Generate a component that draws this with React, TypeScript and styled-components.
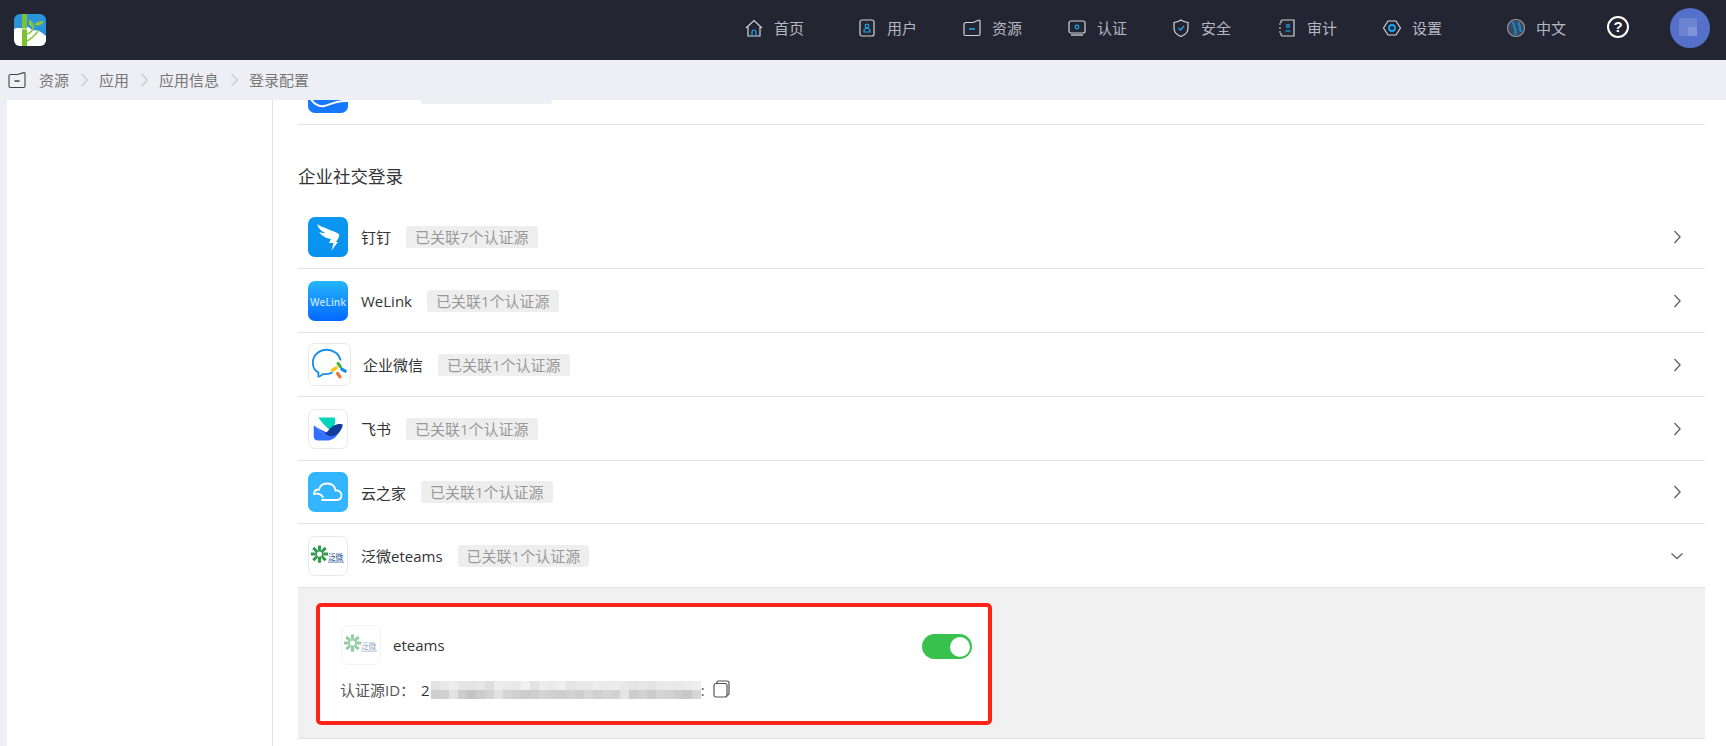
import React from "react";
import styled, { createGlobalStyle } from "styled-components";

const GlobalStyle = createGlobalStyle`
  html, body {
    margin: 0;
    padding: 0;
    height: 100%;
    overflow: hidden;
    background: #fff;
    font-family: "Open Sans", "Noto Sans CJK SC", sans-serif;
    font-size: 15px;
    color: #333;
  }
`;

const Page = styled.div`
  display: flex;
  flex-direction: column;
  height: 746px;
  overflow: hidden;
`;

const Header = styled.header`
  display: flex;
  align-items: center;
  height: 60px;
  flex: none;
  padding: 0 16px 0 14px;
  background: #232632;
`;

const Logo = styled.svg`
  width: 32px;
  height: 32px;
  display: block;
`;

const Nav = styled.nav`
  display: flex;
  align-items: center;
  margin-left: auto;
`;

const NavItem = styled.div<{ $width: number }>`
  display: flex;
  align-items: center;
  gap: 11px;
  width: ${(p) => p.$width}px;
  color: #b4b7c0;
  white-space: nowrap;
  line-height: 20px;
  margin-top: -4px;
`;

const NavIcon = styled.svg`
  width: 18px;
  height: 18px;
  flex: none;
  fill: none;
  stroke: #d2d4d9;
  stroke-width: 1.2;
`;

const Help = styled.div`
  width: 22px;
  height: 22px;
  margin-top: -6px;
  border: 2px solid #fff;
  border-radius: 50%;
  box-sizing: border-box;
  color: #fff;
  font: bold 15px/18px "Liberation Sans", sans-serif;
  text-align: center;
`;

const Avatar = styled.svg`
  width: 40px;
  height: 40px;
  margin-left: 41px;
  margin-top: -4px;
  flex: none;
`;

const Crumbs = styled.div`
  display: flex;
  align-items: center;
  height: 40px;
  flex: none;
  gap: 11.5px;
  padding-left: 8px;
  background: #eeeff4;
  color: #767676;
  line-height: 20px;
`;

const CrumbFolder = styled.svg`
  width: 18px;
  height: 16px;
  margin-right: 1.5px;
  fill: none;
  stroke: #444;
  stroke-width: 1.1;
`;

const CrumbArrow = styled.svg`
  width: 7px;
  height: 14px;
  fill: none;
  stroke: #c6c7cc;
  stroke-width: 1.2;
`;

const Main = styled.main`
  display: flex;
  flex: 1;
  min-height: 0;
  overflow: hidden;
  background: #eeeff4;
  padding-left: 7px;
`;

const Sidebar = styled.aside`
  width: 266px;
  flex: none;
  box-sizing: border-box;
  background: #fff;
  border-right: 1px solid #e2e2e2;
`;

const Content = styled.section`
  flex: 1;
  min-width: 0;
  background: #fff;
  padding: 0 21px 0 25px;
`;

/* the list is scrolled: its first row sits partly under the breadcrumb */
const ScrolledList = styled.div`
  margin-top: -39px;
`;

const SectionTitle = styled.h3`
  margin: 0;
  padding: 38px 0 16px;
  font-size: 17.5px;
  font-weight: 400;
  line-height: 26px;
  color: #333;
`;

const Row = styled.div<{ $height?: number }>`
  display: flex;
  align-items: center;
  height: ${(p) => p.$height ?? 64}px;
  box-sizing: border-box;
  padding: 0 21px 0 10px;
  border-bottom: 1px solid #e2e2e2;
`;

const BrandBox = styled.div<{ $size?: number; $bordered?: boolean; $faded?: boolean }>`
  width: ${(p) => p.$size ?? 40}px;
  height: ${(p) => p.$size ?? 40}px;
  flex: none;
  box-sizing: border-box;
  overflow: hidden;
  border-radius: 7px;
  border: ${(p) => (p.$bordered ? "1px solid #e9e9ec" : "none")};
  opacity: ${(p) => (p.$faded ? 0.5 : 1)};
  background: #fff;

  svg {
    display: block;
    width: 100%;
    height: 100%;
  }
`;

const Name = styled.span<{ $shift?: number }>`
  margin-left: ${(p) => p.$shift ?? 13}px;
  white-space: nowrap;
  color: #333;
`;

const Tag = styled.span`
  margin-left: 15px;
  padding: 0 9px;
  height: 22px;
  line-height: 22px;
  border-radius: 3px;
  background: #eeeeee;
  color: #999;
  white-space: nowrap;
`;

/* the row under the breadcrumb only shows the bottom edge of its tag */
const ScrolledOffTag = styled(Tag)`
  width: 131px;
  margin-left: 73px;
  padding: 0;
  background: #eeeff3;
`;

const Chevron = styled.svg`
  margin-left: auto;
  width: 14px;
  height: 14px;
  fill: none;
  stroke: #666;
  stroke-width: 1.4;
`;

const Panel = styled.div`
  height: 151px;
  box-sizing: border-box;
  padding: 15px 0 0 18px;
  background: #f1f1f1;
  border-bottom: 1px solid #e2e2e2;
`;

const Card = styled.div`
  width: 676px;
  height: 122px;
  box-sizing: border-box;
  padding: 18px 16px 0 21px;
  background: #fff;
  border: 4px solid #ff2418;
  border-radius: 5px;
`;

const CardHead = styled.div`
  display: flex;
  align-items: center;
`;

const Toggle = styled.div`
  display: flex;
  justify-content: flex-end;
  align-items: center;
  width: 50px;
  height: 25px;
  margin-left: auto;
  margin-top: 3px;
  box-sizing: border-box;
  padding: 0 2px;
  border-radius: 13px;
  background: #38c14d;
`;

const Knob = styled.span`
  width: 20px;
  height: 20px;
  border-radius: 50%;
  background: #fff;
`;

const IdRow = styled.div`
  display: flex;
  align-items: center;
  height: 20px;
  margin-top: 15px;
  margin-left: -1px;
  color: #555;
  line-height: 20px;
`;

const IdValue = styled.span`
  margin-left: 6px;
  color: #333;
`;

const Mosaic = styled.svg`
  width: 270px;
  height: 18px;
  margin-left: 1px;
  flex: none;
`;

const CopyIcon = styled.svg`
  width: 17px;
  height: 18px;
  margin-left: 8px;
  margin-top: -2px;
  fill: none;
  stroke: #555;
  stroke-width: 1.2;
`;

const blue = "#1ea7f0";

const navItems: { label: string; width: number; icon: React.ReactNode }[] = [
  {
    label: "首页",
    width: 113,
    icon: (
      <>
        <path d="M1 9 9 1.5 17 9" />
        <path d="M3 8v9h12V8" />
        <path d="M7 17v-4a2 2 0 0 1 4 0v4" stroke={blue} />
      </>
    ),
  },
  {
    label: "用户",
    width: 105,
    icon: (
      <>
        <rect x="2" y="1" width="14" height="16" rx="2" />
        <circle cx="9" cy="7" r="1.8" stroke={blue} />
        <path d="M6 13v-1.500a3 2 0 0 1 6 0V13z" stroke={blue} />
      </>
    ),
  },
  {
    label: "资源",
    width: 105,
    icon: (
      <>
        <path d="M1 5.500a2 2 0 0 1 2-2h7l6-2.500a1 1 0 0 1 1 1V15a1.500 1.500 0 0 1-1.500 1.500h-13A1.500 1.500 0 0 1 1 15z" />
        <path d="M6 10h6" stroke={blue} strokeWidth="1.6" />
      </>
    ),
  },
  {
    label: "认证",
    width: 104,
    icon: (
      <>
        <rect x="1" y="2" width="16" height="12" rx="2" />
        <path d="M3 16h12" strokeWidth="2" stroke="#999" />
        <circle cx="9" cy="8" r="1.800" stroke={blue} />
      </>
    ),
  },
  {
    label: "安全",
    width: 106,
    icon: (
      <>
        <path d="M9 1c2 1.500 4 2 7 2.500V9c0 4-3 7-7 8.500C5 16 2 13 2 9V3.500C5 3 7 2.500 9 1z" />
        <path d="m6.500 9 2 2 3.500-4" stroke={blue} />
      </>
    ),
  },
  {
    label: "审计",
    width: 105,
    icon: (
      <>
        <path d="M3 4V2.500A1.500 1.500 0 0 1 4.500 1H16v16H4.500A1.500 1.500 0 0 1 3 15.500V14" />
        <path d="M1 5h3M1 9h3M1 13h3" strokeDasharray="2 1" />
        <circle cx="10" cy="7" r="1.500" stroke={blue} />
        <path d="M7.500 12h5" stroke={blue} />
      </>
    ),
  },
  {
    label: "设置",
    width: 124,
    icon: (
      <>
        <path d="M5 2h8l4.500 7-4.500 7H5L.5 9z" />
        <circle cx="9" cy="9" r="3" stroke={blue} strokeWidth="1.800" />
      </>
    ),
  },
  {
    label: "中文",
    width: 100,
    icon: (
      <>
        <circle cx="9" cy="9" r="8.500" fill="#3b4a5a" stroke="#8a8d94" />
        <path d="M5 3c3 2 1 4 3 6s-1 5 1 7M12 3c-2 3 2 3 1 6s2 3 2 3" stroke="#1b86d0" strokeWidth="2.200" />
      </>
    ),
  },
];

const LogoMark = () => (
  <Logo viewBox="0 0 32 32">
    <defs>
      <clipPath id="logoClip">
        <rect width="32" height="32" rx="6" />
      </clipPath>
    </defs>
    <g clipPath="url(#logoClip)">
      <rect width="32" height="32" fill="#2c93d8" />
      <path d="M0 15c4-2 6 0 9-1s5-2 8 1 5 0 8 2 5 3 7 5v10H0z" fill="#fff" />
      <rect x="8" y="0" width="5" height="32" fill="#7cc230" />
      <path d="M8 15h5" stroke="#e8f4d6" strokeWidth="1" />
      <path d="M13 27c4-2 8-6 11-10M13 20c4-1 6-4 7-8" stroke="#8cc63f" strokeWidth="1.500" fill="none" />
      <path d="M15 6c4 1 5 4 4 8-3-2-5-4-4-8zM20 11c2-3 5-4 10-4-2 4-5 6-10 4z" fill="#8cc63f" />
    </g>
  </Logo>
);

const AlipayLogo = () => (
  <svg viewBox="0 0 40 40">
    <rect width="40" height="40" fill="#1677ff" />
    <path d="M1 23C5 31 11 34 16 33C22 32 28 27 40 28" fill="none" stroke="#fff" strokeWidth="2" />
  </svg>
);

const DingTalkLogo = () => (
  <svg viewBox="0 0 40 40">
    <defs>
      <linearGradient id="ding" x1="0" y1="0" x2="0" y2="1">
        <stop offset="0" stopColor="#0a98f2" />
        <stop offset="1" stopColor="#0890ee" />
      </linearGradient>
    </defs>
    <rect width="40" height="40" fill="url(#ding)" />
    <path
      d="M9 7C15 11 24 13 31 17C32 19 30 22 28 25L30 25L23.500 33.500L25.500 26L21 26L23 22C17 21 13 18 11 15C14 16 15 16 17 16C13 14 10 11 9 7Z"
      fill="#fff"
    />
  </svg>
);

const WeLinkLogo = () => (
  <svg viewBox="0 0 40 40">
    <defs>
      <linearGradient id="welink" x1="0" y1="0" x2="0" y2="1">
        <stop offset="0" stopColor="#25b7fc" />
        <stop offset="1" stopColor="#0468ff" />
      </linearGradient>
    </defs>
    <rect width="40" height="40" fill="url(#welink)" />
    <text
      x="2"
      y="24.500"
      textLength="36"
      lengthAdjust="spacingAndGlyphs"
      fontFamily="Open Sans, sans-serif"
      fontWeight="600"
      fontSize="11"
      fill="#bfe3fb"
    >
      WeLink
    </text>
  </svg>
);

const WeComLogo = () => (
  <svg viewBox="0 0 43 43">
    <path
      d="M24 30c-3 1.500-6 2-9 1.500l-4 2.500c-1 .5-1.500 0-1.300-.8l.3-3C6 28 4 24 4 19.500 4 12 10.500 6 18.500 6c7 0 13 4 14.500 10.500"
      fill="none"
      stroke="#1a8fe8"
      strokeWidth="1.900"
      strokeLinecap="round"
    />
    <g fill="none" strokeWidth="3.400" strokeLinecap="round">
      <path d="M30.500 20.500 33 24" stroke="#52b043" />
      <path d="M34.500 26.500 38 28.500" stroke="#1a8fe8" />
      <path d="M32.500 34.500 30 31" stroke="#f0742c" />
      <path d="M24.500 27.500 28.500 25" stroke="#fcc212" />
    </g>
  </svg>
);

const FeishuLogo = () => (
  <svg viewBox="0 0 40 40">
    <path d="M10 8h17c1 3 1 6-1 9l-3 5c-5-4-10-9-13-14z" fill="#00d6b9" />
    <path d="M5 16c5 5 11 10 17 12 5 1 10-2 13-10-4 6-8 8-12 7C17 23 10 20 5 16z" fill="#2b63ff" />
    <path d="M5 16v12c0 2 1 4 4 4h12c6-1 10-6 12-12-3 4-6 7-11 8-6-2-12-7-17-12z" fill="#3370ff" />
    <path d="M20 22c4-5 9-8 15-7 1 1 0 2 0 3-3 6-7 10-13 10l-6-3c1-1 3-2 4-3z" fill="#133c9a" />
  </svg>
);

const YunzhijiaLogo = () => (
  <svg viewBox="0 0 40 40">
    <rect width="40" height="40" fill="#33b5ff" />
    <path
      d="M6 22c0-3 2-4.500 5-4.500 1-4 4-6 8-6 5 0 8 3 8.500 7 3-.5 6 1.500 6 4.500 0 3-2 5-5 5H14"
      fill="none"
      stroke="#fff"
      strokeWidth="1.800"
      strokeLinecap="round"
    />
    <path d="M6 22c4-1 7 0 9 3" fill="none" stroke="#fff" strokeWidth="1.800" strokeLinecap="round" />
  </svg>
);

const EteamsLogo = () => (
  <svg viewBox="0 0 40 40">
    <g stroke="#2f9a4d" strokeWidth="3.200">
      <path d="M11 9v5M11 22v5M2 18h5M15 18h5M4.500 11.500 8 15M14 21l3.500 3.500M4.500 24.500 8 21M14 15l3.500-3.500" />
    </g>
    <circle cx="11" cy="18" r="3.500" fill="none" stroke="#2f9a4d" strokeWidth="1.600" />
    <text
      x="20"
      y="24"
      fontFamily="Noto Sans CJK SC, sans-serif"
      fontSize="8"
      fontWeight="500"
      fill="#35609b"
    >
      泛微
    </text>
    <path d="M20 26.500h17" stroke="#7f9cc0" strokeWidth="1.200" />
  </svg>
);

const rows: {
  name: string;
  logo: React.ReactNode;
  count: number;
  size?: number;
  bordered?: boolean;
  height?: number;
  shift?: number;
  open?: boolean;
}[] = [
  { name: "钉钉", logo: <DingTalkLogo />, count: 7 },
  { name: "WeLink", logo: <WeLinkLogo />, count: 1 },
  { name: "企业微信", logo: <WeComLogo />, count: 1, size: 43, bordered: true, shift: 12 },
  { name: "飞书", logo: <FeishuLogo />, count: 1, bordered: true },
  { name: "云之家", logo: <YunzhijiaLogo />, count: 1, height: 63 },
  { name: "泛微eteams", logo: <EteamsLogo />, count: 1, bordered: true, open: true },
];

const topCells = [
  226, 232, 236, 228, 228, 230, 222, 236, 234, 232, 240, 226, 236, 234, 238, 228, 232, 232, 236,
  234, 236, 232, 228, 230, 226, 232, 234, 232, 236, 238,
];
const bottomCells = [
  206, 208, 226, 204, 196, 204, 210, 226, 212, 208, 204, 206, 212, 208, 206, 210, 206, 214, 208,
  212, 210, 228, 204, 210, 204, 212, 210, 204, 200, 214,
];

const IdMosaic = () => (
  <Mosaic viewBox="0 0 270 18" shapeRendering="crispEdges">
    {topCells.map((v, i) => (
      <rect key={i} x={i * 9} y="0" width="9" height="9" fill={`rgb(${v},${v},${v})`} />
    ))}
    {bottomCells.map((v, i) => (
      <rect key={i} x={i * 9} y="9" width="9" height="9" fill={`rgb(${v},${v},${v})`} />
    ))}
  </Mosaic>
);

export default function App() {
  return (
    <Page>
      <GlobalStyle />
      <Header>
        <LogoMark />
        <Nav>
          {navItems.map((item) => (
            <NavItem key={item.label} $width={item.width}>
              <NavIcon viewBox="0 0 18 18">{item.icon}</NavIcon>
              {item.label}
            </NavItem>
          ))}
          <Help>?</Help>
        </Nav>
        <Avatar viewBox="0 0 40 40">
          <circle cx="20" cy="20" r="20" fill="#5470c8" />
          <rect x="9" y="10" width="18" height="18" fill="#6b84d2" />
          <rect x="18" y="19" width="9" height="9" fill="#7f94da" />
        </Avatar>
      </Header>

      <Crumbs>
        <CrumbFolder viewBox="0 0 18 16">
          <path d="M1 4a1.500 1.500 0 0 1 1.500-1.500h7L16 .6a.8.8 0 0 1 1 .8V14a1.500 1.500 0 0 1-1.500 1.500h-13A1.500 1.500 0 0 1 1 14z" />
          <path d="M6.500 9h5" strokeWidth="1.500" />
        </CrumbFolder>
        {["资源", "应用", "应用信息", "登录配置"].map((label, i) => (
          <React.Fragment key={label}>
            {i > 0 && (
              <CrumbArrow viewBox="0 0 7 14">
                <path d="m.5 1 6 6-6 6" />
              </CrumbArrow>
            )}
            <span>{label}</span>
          </React.Fragment>
        ))}
      </Crumbs>

      <Main>
        <Sidebar />
        <Content>
          <ScrolledList>
            <Row>
              <BrandBox>
                <AlipayLogo />
              </BrandBox>
              <ScrolledOffTag />
            </Row>
            <SectionTitle>企业社交登录</SectionTitle>
            {rows.map((row) => (
              <React.Fragment key={row.name}>
                <Row $height={row.height}>
                  <BrandBox $size={row.size} $bordered={row.bordered}>
                    {row.logo}
                  </BrandBox>
                  <Name $shift={row.shift}>{row.name}</Name>
                  <Tag>已关联{row.count}个认证源</Tag>
                  <Chevron viewBox="0 0 14 14">
                    {row.open ? <path d="m1.500 4.500 5.500 5 5.500-5" /> : <path d="m4.500 1 5.500 6-5.500 6" />}
                  </Chevron>
                </Row>
                {row.open && (
                  <Panel>
                    <Card>
                      <CardHead>
                        <BrandBox $bordered $faded>
                          <EteamsLogo />
                        </BrandBox>
                        <Name $shift={12}>eteams</Name>
                        <Toggle>
                          <Knob />
                        </Toggle>
                      </CardHead>
                      <IdRow>
                        {"认证源ID\uFF1A"}
                        <IdValue>2</IdValue>
                        <IdMosaic />
                        <span>:</span>
                        <CopyIcon viewBox="0 0 17 18">
                          <rect x="1" y="3.500" width="13" height="13.500" rx="2" />
                          <path d="M4 3.500V2.500A1.500 1.500 0 0 1 5.500 1H14a2 2 0 0 1 2 2v10.500a1.500 1.500 0 0 1-2 1.500" />
                        </CopyIcon>
                      </IdRow>
                    </Card>
                  </Panel>
                )}
              </React.Fragment>
            ))}
          </ScrolledList>
        </Content>
      </Main>
    </Page>
  );
}
